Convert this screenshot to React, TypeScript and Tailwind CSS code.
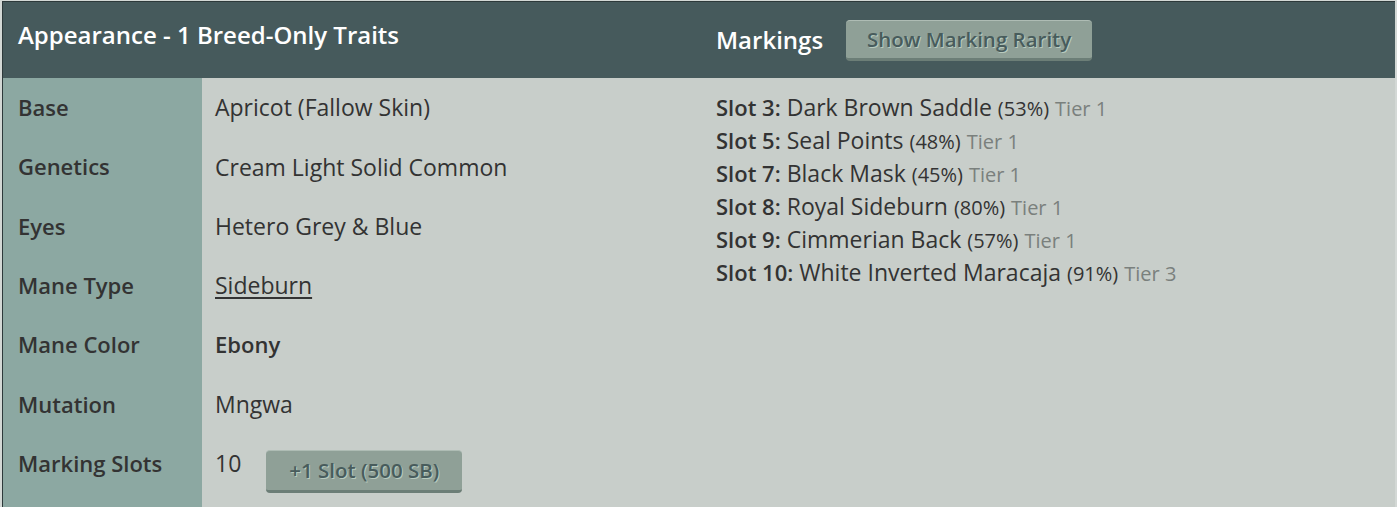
import React from 'react';

const ROWS: { label: string; value: React.ReactNode }[] = [
  { label: 'Base', value: 'Apricot (Fallow Skin)' },
  { label: 'Genetics', value: 'Cream Light Solid Common' },
  { label: 'Eyes', value: 'Hetero Grey & Blue' },
  { label: 'Mane Type', value: <a href="#" className="underline underline-offset-[3px]">Sideburn</a> },
  { label: 'Mane Color', value: <span className="font-semibold text-[22px]">Ebony</span> },
  { label: 'Mutation', value: 'Mngwa' },
];

const MARKINGS = [
  { slot: 3, name: 'Dark Brown Saddle', pct: 53, tier: 1 },
  { slot: 5, name: 'Seal Points', pct: 48, tier: 1 },
  { slot: 7, name: 'Black Mask', pct: 45, tier: 1 },
  { slot: 8, name: 'Royal Sideburn', pct: 80, tier: 1 },
  { slot: 9, name: 'Cimmerian Back', pct: 57, tier: 1 },
  { slot: 10, name: 'White Inverted Maracaja', pct: 91, tier: 3 },
];

const btn =
  'rounded-[4px] bg-[#8fa097] border-t border-t-[#aebcb4] border-b-[3px] border-b-[#6c7e77] text-[#485c5c] font-semibold [text-shadow:1px_1px_0_#b9cbbf]';

const App: React.FC = () => {
  return (
    <div className="min-h-screen bg-[#d3d8d5] pl-[2px] pt-px pr-[2px] font-['Open_Sans',sans-serif] text-[#333]">
      <div className="border-l border-t border-[#2d393a] h-[506px] overflow-hidden bg-[#c8ceca]">
        {/* header */}
        <div className="flex h-[76px] bg-[#465a5c] text-white">
          <div className="w-[697px] pl-[15px] pt-[17px]">
            <h2 className="text-[24px] leading-[32px] font-semibold">Appearance - 1 Breed-Only Traits</h2>
          </div>
          <div className="flex items-center gap-[23px] pl-[16px]">
            <h2 className="text-[24px] leading-[32px] font-semibold">Markings</h2>
            <button className={`${btn} h-[41px] w-[246px] text-[20.5px]`}>Show Marking Rarity</button>
          </div>
        </div>

        <div className="flex">
          {/* traits table */}
          <div className="w-[697px] flex">
            <div className="w-[199px] bg-[#8ca8a2] pb-10">
              {ROWS.map((r) => (
                <div key={r.label} className="h-[59.3px] flex items-center pl-[15px] text-[22px] font-semibold">
                  {r.label}
                </div>
              ))}
              <div className="h-[59.3px] flex items-center pl-[15px] text-[22px] font-semibold">Marking Slots</div>
            </div>
            <div className="flex-1">
              {ROWS.map((r) => (
                <div key={r.label} className="h-[59.3px] flex items-center pl-[13px] text-[23px]">
                  {r.value}
                </div>
              ))}
              <div className="h-[59.3px] flex items-center pl-[13px] text-[23px] gap-[25px]">
                <span>10</span>
                <button className={`${btn} h-[43px] w-[196px] text-[20.5px] mt-[16px]`}>+1 Slot (500 SB)</button>
              </div>
            </div>
          </div>

          {/* markings list */}
          <div className="pl-[16px] pt-[13px]">
            {MARKINGS.map((m) => (
              <div key={m.slot} className="text-[23px] leading-[33px] h-[33px] whitespace-nowrap">
                <span className="font-semibold text-[22px]">Slot {m.slot}:</span> {m.name}{' '}
                <span className="text-[20px] leading-none">({m.pct}%)</span>{' '}
                <span className="text-[20px] leading-none text-[#7a807d]">Tier {m.tier}</span>
              </div>
            ))}
          </div>
        </div>
      </div>
    </div>
  );
};

export default App;
